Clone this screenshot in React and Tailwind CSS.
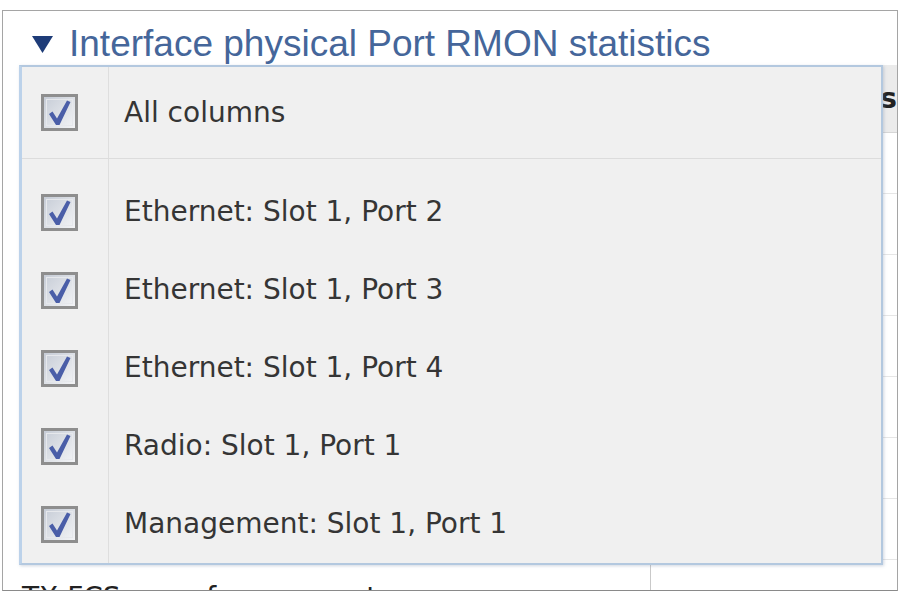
import React from "react";

const items = [
  "Ethernet: Slot 1, Port 2",
  "Ethernet: Slot 1, Port 3",
  "Ethernet: Slot 1, Port 4",
  "Radio: Slot 1, Port 1",
  "Management: Slot 1, Port 1",
];

function Check() {
  return (
    <div className="relative w-[37px] h-[37px] border-[3px] border-[#8e8e8e] bg-gradient-to-br from-[#c6ccd6] to-[#f3f4f6] p-[2px]">
      <div className="w-full h-full border border-[#e6e8ec]"></div>
      <svg viewBox="0 0 37 37" className="absolute left-[-3px] top-[-3px] w-[37px] h-[37px]">
        <polygon
          points="8,20 11.5,17.5 16,24.5 26,6.5 29.5,8 18.5,31 15,31"
          fill="#4a5ea8"
        />
      </svg>
    </div>
  );
}

function Row({ label, h }) {
  return (
    <div className={`flex ${h}`}>
      <div className="w-[87px] shrink-0 border-r border-[#dedede] flex items-center pl-[19px]">
        <Check />
      </div>
      <div className="flex items-center pl-[15px] text-[28px] text-[#353535]">
        {label}
      </div>
    </div>
  );
}

export default function App() {
  const rows = [0, 1, 2, 3, 4, 5, 6];
  return (
    <div className="w-[900px] h-[595px] bg-white pt-[10px] pl-[2px] overflow-hidden">
      <div className="w-[896px] h-[581px] border border-[#a5a5a5] border-b-[#8a8a8a] overflow-hidden bg-white">
        <div className="flex items-center h-[36px] mt-[14px] pl-[29px]">
          <svg width="21" height="18" viewBox="0 0 21 18" className="mr-[16px] mt-[1px]">
            <polygon points="0,1 21,1 10.5,18" fill="#1e3c78" />
          </svg>
          <span
            className="text-[37px] leading-none text-[#45669a]"
            style={{ fontFamily: '"Liberation Sans", Arial, sans-serif' }}
          >
            Interface physical Port RMON statistics
          </span>
        </div>

        <div
          className="relative mt-[4px] ml-[16px]"
          style={{ fontFamily: '"DejaVu Sans", Verdana, sans-serif' }}
        >
          <div className="flex h-[68px] bg-[#ebebeb] border-b border-[#d6d6d6]">
            <div className="w-[632px] border-r border-[#d0d0d0]"></div>
            <div className="w-[232px] border-r border-[#c8d4e2]"></div>
            <div className="flex-1 flex items-center pl-[2px] text-[28px] font-bold text-[#222]">
              Status
            </div>
          </div>
          {rows.map((r) => (
            <div key={r} className="flex h-[61px] border-b border-[#e6e6e6]">
              <div className="w-[632px] border-r border-[#e0e0e0]"></div>
              <div className="w-[232px] border-r border-[#e0e0e0]"></div>
              <div className="flex-1"></div>
            </div>
          ))}
          <div className="flex h-[61px] ml-[-16px]">
            <div className="w-[648px] border-r border-[#c9c9c9] pl-[19px] pt-[24px] text-[28px] leading-none text-[#222] whitespace-nowrap">
              TX FCS error frame count
            </div>
            <div className="w-[232px]"></div>
          </div>

          <div className="absolute left-0 top-0 w-[864px] h-[500px] border-2 border-[#b3c8df] border-l-[3px] border-l-[#bcd2ea] bg-[#f0f0f0] shadow-[1px_1px_3px_rgba(120,140,170,0.35)] flex flex-col">
            <div className="border-b border-[#dcdcdc]">
              <Row label="All columns" h="h-[91px]" />
            </div>
            <div className="flex flex-col flex-1">
              <div className="flex h-[14px]">
                <div className="w-[87px] border-r border-[#dedede]"></div>
              </div>
              {items.map((it) => (
                <Row key={it} label={it} h="h-[78px]" />
              ))}
              <div className="flex flex-1">
                <div className="w-[87px] border-r border-[#dedede]"></div>
              </div>
            </div>
          </div>
        </div>
      </div>
    </div>
  );
}
